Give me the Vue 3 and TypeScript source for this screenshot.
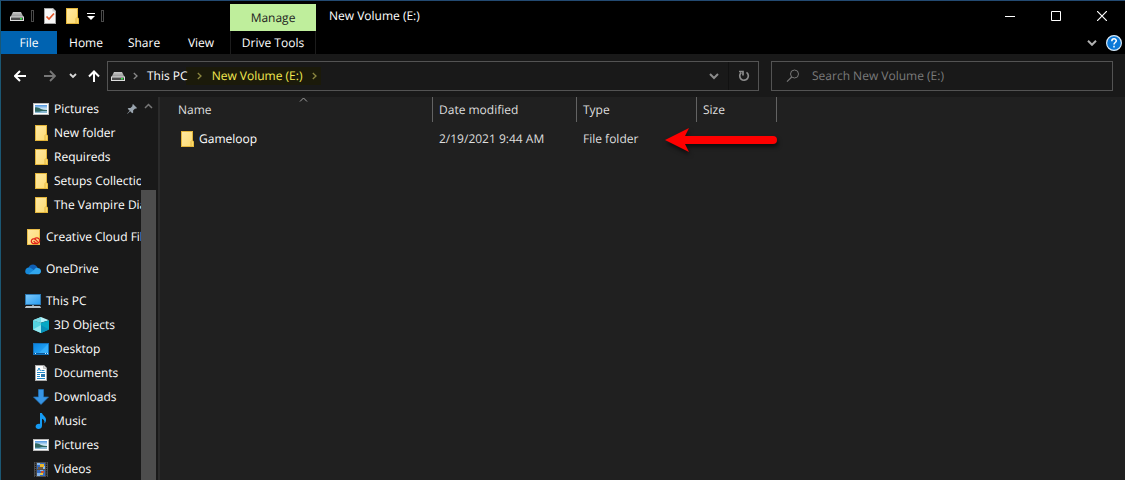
<script setup lang="ts">
import { ref } from 'vue'

interface NavItem {
  label: string
  icon: string
  level: 1 | 2
  pinned?: boolean
  gap?: boolean
}

interface FileRow {
  name: string
  modified: string
  type: string
  size: string
}

const tabs = ['Home', 'Share', 'View']
const query = ref('')

const navItems: NavItem[] = [
  { label: 'Pictures', icon: 'picture', level: 2, pinned: true },
  { label: 'New folder', icon: 'folder', level: 2 },
  { label: 'Requireds', icon: 'folder', level: 2 },
  { label: 'Setups Collectio', icon: 'folder', level: 2 },
  { label: 'The Vampire Dia', icon: 'folder', level: 2 },
  { label: 'Creative Cloud Fil', icon: 'cloudfolder', level: 1, gap: true },
  { label: 'OneDrive', icon: 'onedrive', level: 1, gap: true },
  { label: 'This PC', icon: 'pc', level: 1, gap: true },
  { label: '3D Objects', icon: 'cube', level: 2 },
  { label: 'Desktop', icon: 'desktop', level: 2 },
  { label: 'Documents', icon: 'document', level: 2 },
  { label: 'Downloads', icon: 'download', level: 2 },
  { label: 'Music', icon: 'music', level: 2 },
  { label: 'Pictures', icon: 'picture', level: 2 },
  { label: 'Videos', icon: 'video', level: 2 },
]

const files: FileRow[] = [
  { name: 'Gameloop', modified: '2/19/2021 9:44 AM', type: 'File folder', size: '' },
]
</script>

<template>
  <svg class="defs" aria-hidden="true">
    <defs>
      <linearGradient id="gFolder" x1="0" y1="0" x2="1" y2="1">
        <stop offset="0" stop-color="#ffe9a2" /><stop offset="1" stop-color="#fddc75" />
      </linearGradient>
      <linearGradient id="gScreen" x1="0" y1="0" x2="1" y2="1">
        <stop offset="0" stop-color="#7cc8fb" /><stop offset="1" stop-color="#2a9df0" />
      </linearGradient>
      <linearGradient id="gDesk" x1="0" y1="0" x2="1" y2="1">
        <stop offset="0" stop-color="#0a84e0" /><stop offset="1" stop-color="#2fb0ff" />
      </linearGradient>
      <linearGradient id="gDrive" x1="0" y1="0" x2="0" y2="1">
        <stop offset="0" stop-color="#c9c9c9" /><stop offset="1" stop-color="#8f8f8f" />
      </linearGradient>
      <linearGradient id="gSky" x1="0" y1="0" x2="0" y2="1">
        <stop offset="0" stop-color="#4c94e0" /><stop offset="0.5" stop-color="#d8ecf5" /><stop offset="1" stop-color="#7fb4d3" />
      </linearGradient>
    </defs>
    <symbol id="i-folder" viewBox="0 0 16 16">
      <path d="M2 0h12v9.5l1 1V16H2z" fill="#e3b53b" />
      <path d="M3 1h10v14H3z" fill="url(#gFolder)" />
      <path d="M12.4 15V10.800l.9-.9.9.9V15z" fill="#fbd968" />
      <path d="M12 15.500v-5l1-1.200" fill="none" stroke="#dba92f" stroke-width=".7" />
    </symbol>
    <symbol id="i-cloudfolder" viewBox="0 0 16 16">
      <path d="M2 0h13v16H2z" fill="#e9bd4a" />
      <path d="M3 1h11v14H3z" fill="url(#gFolder)" />
      <g fill="none" stroke="#e2231a" stroke-width="1.300">
        <path d="M12.800 14.600H8.700a2.400 2.400 0 1 1 1.500-4.300l2.600 2.600" />
        <path d="M8.600 12l1.700 1.700a2.700 2.700 0 1 0 1-4.800 2.500 2.500 0 0 0-1.800 1" />
      </g>
    </symbol>
    <symbol id="i-picture" viewBox="0 0 16 16">
      <path d="M0 2h16v12H0z" fill="#b9b9b9" />
      <path d="M1 3h14v10H1z" fill="#fff" />
      <path d="M2 4h12v8H2z" fill="url(#gSky)" />
      <path d="M2 6.400c2-.6 4 .4 6 1.600 2 .9 4 1.200 6 1.100v1H2z" fill="#2f6660" />
      <path d="M2 10h12v2H2z" fill="#8abad4" /><path d="M2 10h7l-3 1H2z" fill="#467b83" />
    </symbol>
    <symbol id="i-onedrive" viewBox="0 0 16 16">
      <path d="M3.400 7.200C4 3.600 9.700 1.300 12.500 6.500L9 10z" fill="#0f5fb4" />
      <path d="M.2 10.500C.2 7 3.400 5.700 5.800 7l5.200 3.500-6 2.700H3C1.300 13.200.2 12 .2 10.500z" fill="#1689da" />
      <path d="M9.200 8.800C10.500 6.200 13 6.400 13.600 7.300c1.600.2 2.400 1.600 2.400 3 0 1.700-1.200 2.900-2.700 2.900H3.400z" fill="#31a7ee" />
    </symbol>
    <symbol id="i-pc" viewBox="0 0 16 16">
      <path d="M0 1h16v11H0z" fill="#2c79b3" /><path d="M1 2h14v9H1z" fill="url(#gScreen)" />
      <path d="M7 12h2v1.500H7z" fill="#7f98aa" />
      <path d="M1 13h14l1 2H0z" fill="#d5dce2" /><path d="M1 14h14" stroke="#72838f" stroke-width=".6" />
    </symbol>
    <symbol id="i-cube" viewBox="0 0 16 16">
      <path d="M0 3.200 8 0l8 3.200-8 2.600z" fill="#b7f3f9" /><path d="M0 3.200 8 5.800V16L0 12.600z" fill="#54d2df" />
      <path d="M8 5.800l8-2.600v9.400L8 16z" fill="#06a8c4" /><path d="M0 3.200 8 0v5.800z" fill="#79dde8" />
      <path d="M0 12.600 8 8v8z" fill="#92e8ef" /><path d="M8 16V8l8 4.600z" fill="#0791ba" />
    </symbol>
    <symbol id="i-desktop" viewBox="0 0 16 16">
      <path d="M0 2h16v12H0z" fill="#1370b8" /><path d="M1 3h14v10H1z" fill="url(#gDesk)" />
      <path d="M6 12 15 3v9z" fill="#43b8ff" opacity=".6" /><path d="M1 12h14v1H1z" fill="#0a5798" />
      <path d="M2 12h1v1H2zM12 12h1v1h-1zM14 12h1v1h-1z" fill="#c6eaff" />
    </symbol>
    <symbol id="i-document" viewBox="0 0 16 16">
      <path d="M2 0h9l3 3v13H2z" fill="#aaa" /><path d="M3 1h7.500L13 3.500V15H3z" fill="#fff" />
      <path d="M10.500 0v3.500H14" fill="#d8d8d8" stroke="#999" stroke-width=".5" />
      <path d="M4.500 6 6 3l1.500 3M4 7.500h8M4 9.500h3M4 11.500h3M4 13.500h8M8.500 5.500h3" fill="none" stroke="#2289c9" />
      <path d="M8 9h4v3H8z" fill="#2c79ae" />
    </symbol>
    <symbol id="i-download" viewBox="0 0 16 16">
      <path d="M5.500.5h5v7.500h5L8 15.500.5 8h5z" fill="#3794e4" stroke="#2277be" stroke-width=".7" />
    </symbol>
    <symbol id="i-music" viewBox="0 0 16 16">
      <path d="M7 0h2c.3 2.200 4 3.400 4 6.800 0 1.700-.7 2.900-1.600 3.800.5-3-.8-4.300-2.400-4.800v6.900C9 14.800 7.300 16 5.400 16 3.700 16 2.600 15 2.600 13.600c0-2 2.200-3.300 4.400-2.700z" fill="#159bf3" />
    </symbol>
    <symbol id="i-video" viewBox="0 0 16 16">
      <path d="M1 1h14v15H1z" fill="#4e4e4e" />
      <path d="M2.500 1.500V16M13.500 1.500V16" stroke="#161616" stroke-width="1.200" stroke-dasharray="1.200 1" />
      <path d="M4 2h8v6H4zM4 9h8v6H4z" fill="#356cc4" />
      <path d="M4 2h3v2H4zM10 5h2v3h-2z" fill="#86b9ef" /><path d="M7 3h4v3H7z" fill="#e8b52b" />
      <path d="M5 6h5v2H5z" fill="#6d5840" /><path d="M7 9h3v1H7zM4 12h3v3H4z" fill="#87b4e7" />
      <path d="M8 10h3v2H8z" fill="#c6512e" /><path d="M7 12h3v2H7z" fill="#e2c647" />
    </symbol>
    <symbol id="i-drive" viewBox="0 0 16 16">
      <path d="M4 4h8l2.500 5h-13z" fill="url(#gDrive)" /><path d="M1 8.500h14V13H1z" fill="#dedede" />
      <path d="M2 9.500h12V12H2z" fill="#4b4b4b" /><path d="M11 10h2v1.500h-2z" fill="#34e746" />
    </symbol>
  </svg>

  <div class="window">
    <header class="titlebar">
      <div class="quick">
        <svg class="ico"><use href="#i-drive" /></svg>
        <span class="sep"></span>
        <button class="plain prop" aria-label="Properties">
          <svg class="ico" viewBox="0 0 16 16">
            <path d="M2 0h9l3 3v13H2z" fill="#a5a5a5" /><path d="M3 1h7.500L13 3.500V15H3z" fill="#f7f7f7" />
            <path d="M10.500 0v3.500H14" fill="#ccc" /><path d="M4.500 8.500 7 11l5-5.500" fill="none" stroke="#e4572a" stroke-width="1.700" />
          </svg>
        </button>
        <button class="plain newf" aria-label="New folder"><svg class="ico"><use href="#i-folder" /></svg></button>
        <button class="plain more" aria-label="Customize Quick Access Toolbar">
          <svg width="8" height="8" viewBox="0 0 8 8"><path d="M0 1.500h8" stroke="#fff" /><path d="M0 4h8L4 8z" fill="#fff" /></svg>
        </button>
        <span class="sep"></span>
      </div>
      <div class="manage">Manage</div>
      <h1>New Volume (E:)</h1>
      <div class="controls">
        <button class="plain" aria-label="Minimize"><svg width="10" height="10"><path d="M0 5.500h10" stroke="#fff" /></svg></button>
        <button class="plain" aria-label="Maximize"><svg width="10" height="10"><path d="M.5.5h9v9h-9z" fill="none" stroke="#fff" /></svg></button>
        <button class="plain" aria-label="Close"><svg width="10" height="10"><path d="M0 0l10 10M10 0 0 10" stroke="#fff" stroke-width="1.200" /></svg></button>
      </div>
    </header>

    <nav class="tabs" aria-label="Ribbon">
      <button class="plain file">File</button>
      <button v-for="t in tabs" :key="t" class="plain tab">{{ t }}</button>
      <button class="plain tools">Drive Tools</button>
      <button class="plain expand" aria-label="Expand the Ribbon">
        <svg width="10" height="6" viewBox="0 0 10 6"><path d="M1 .8l4 4 4-4" fill="none" stroke="#b0b0b0" stroke-width="2" /></svg>
      </button>
      <button class="plain help" aria-label="Help">
        <svg width="16" height="16" viewBox="0 0 16 16">
          <circle cx="8" cy="8" r="7.400" fill="#0c79d8" stroke="#d7e9f7" stroke-width="1.200" />
          <path d="M5.800 6.200c0-3.100 4.500-3 4.500-.4 0 1.700-2.300 1.700-2.300 3.600M8 10.800v1.600" fill="none" stroke="#fff" stroke-width="1.500" />
        </svg>
      </button>
    </nav>

    <div class="toolbar">
      <div class="history">
        <button class="plain" aria-label="Back"><svg width="12" height="12" viewBox="0 0 12 12"><path d="M12 6H1.500M6 1 1 6l5 5" fill="none" stroke="#fff" stroke-width="2" /></svg></button>
        <button class="plain" aria-label="Forward"><svg width="12" height="12" viewBox="0 0 12 12"><path d="M0 6h10.500M6 1l5 5-5 5" fill="none" stroke="#777" stroke-width="1.800" /></svg></button>
        <button class="plain recent" aria-label="Recent locations"><svg width="8" height="6" viewBox="0 0 8 6"><path d="M1 1l3 3 3-3" fill="none" stroke="#d8d8d8" stroke-width="1.800" /></svg></button>
        <button class="plain up" aria-label="Up"><svg width="12" height="12" viewBox="0 0 12 12"><path d="M6 12V1.500M1 6.500l5-5 5 5" fill="none" stroke="#fff" stroke-width="2" /></svg></button>
      </div>
      <div class="address">
        <svg class="ico"><use href="#i-drive" /></svg>
        <svg class="crumb" viewBox="0 0 5 8"><path d="M.8 1 4 4 .8 7" /></svg>
        <a href="#" class="place">This PC</a>
        <span class="marked">
          <svg class="crumb" viewBox="0 0 5 8"><path d="M.8 1 4 4 .8 7" /></svg>
          <a href="#">New Volume (E:)</a>
          <svg class="crumb" viewBox="0 0 5 8"><path d="M.8 1 4 4 .8 7" /></svg>
        </span>
        <button class="plain drop" aria-label="Previous locations"><svg width="10" height="8" viewBox="0 0 10 8"><path d="M1 2l4 4 4-4" fill="none" stroke="#8c8c8c" stroke-width="2" /></svg></button>
        <button class="plain refresh" aria-label="Refresh">
          <svg width="12" height="12" viewBox="0 0 12 12"><path d="M8.500 2.400A4.300 4.300 0 1 1 3.200 2.700M1 1.500h4v4" fill="none" stroke="#8c8c8c" stroke-width="1.700" /></svg>
        </button>
      </div>
      <label class="search">
        <svg width="14" height="14" viewBox="0 0 14 14"><circle cx="8.500" cy="5" r="4" fill="none" stroke="#777" /><path d="M5.700 8 1 12.700" stroke="#777" stroke-width="1.200" /></svg>
        <input v-model="query" type="text" placeholder="Search New Volume (E:)" aria-label="Search New Volume (E:)" />
      </label>
    </div>

    <div class="body">
      <aside class="side">
        <nav class="tree" aria-label="Folders">
          <a v-for="(n, i) in navItems" :key="i" href="#" class="node" :class="{ deep: n.level === 2, gap: n.gap }">
            <svg class="ico"><use :href="'#i-' + n.icon" /></svg>
            <span>{{ n.label }}</span>
            <svg v-if="n.pinned" class="pin" viewBox="0 0 10 10">
              <path d="M6 0l4 4-1 .7-.9-.2-2 2 .1 2-1 .8-2-2L.6 9.800l-.4-.4L2.700 6.800l-2-2 .8-.9 2 .1 2-2L5.300.9z" fill="#9aa5af" />
            </svg>
          </a>
        </nav>
        <div class="scroll" aria-hidden="true">
          <svg width="9" height="6" viewBox="0 0 9 6"><path d="M1 5l3.500-3.500L8 5" fill="none" stroke="#777" stroke-width="1.500" /></svg>
          <div class="thumb"></div>
        </div>
      </aside>

      <main class="list">
        <table>
          <colgroup><col class="c-name" /><col class="c-date" /><col class="c-type" /><col class="c-size" /></colgroup>
          <thead>
            <tr>
              <th scope="col" class="first">
                Name
                <svg class="sort" viewBox="0 0 9 5"><path d="M1 4.500 4.500 1 8 4.500" fill="none" stroke="#a0a0a0" /></svg>
              </th>
              <th scope="col">Date modified</th>
              <th scope="col">Type</th>
              <th scope="col">Size</th>
            </tr>
          </thead>
          <tbody>
            <tr v-for="f in files" :key="f.name">
              <td class="name"><div><svg class="ico"><use href="#i-folder" /></svg>{{ f.name }}</div></td>
              <td>{{ f.modified }}</td>
              <td>{{ f.type }}</td>
              <td>{{ f.size }}</td>
            </tr>
          </tbody>
        </table>
        <svg class="arrow" viewBox="0 0 120 36" aria-hidden="true">
          <path d="M2 15 26 3l-4 8h88a4 4 0 0 1 0 8H22l4 8z" fill="#fe0000" />
        </svg>
      </main>
    </div>
  </div>
</template>

<style>
body {
  background: #191919;
}
</style>

<style scoped>
.defs {
  position: absolute;
  width: 0;
  height: 0;
}
.window {
  box-sizing: border-box;
  height: 100vh;
  display: flex;
  flex-direction: column;
  overflow: hidden;
  border-top: 1px solid #234a72;
  border-left: 1px solid #1b5773;
  background: #191919;
  color: #fff;
  font: 12px/16px "Segoe UI", "Open Sans", "Noto Sans", sans-serif;
  text-rendering: geometricPrecision;
}
.plain {
  display: flex;
  align-items: center;
  justify-content: center;
  padding: 0;
  border: 0;
  background: none;
  color: inherit;
  font: inherit;
  text-rendering: inherit;
}
a {
  color: inherit;
  text-decoration: none;
}
svg {
  flex: none;
}
.ico {
  display: block;
  width: 16px;
  height: 16px;
}
.titlebar {
  display: flex;
  height: 30px;
  background: #000;
}
.quick {
  box-sizing: border-box;
  display: flex;
  align-items: center;
  width: 229px;
  padding-left: 8px;
}
.sep {
  box-sizing: border-box;
  width: 3px;
  height: 12px;
  margin-left: 6px;
  border: 1px solid #4a4a4a;
}
.prop {
  margin-left: 8px;
}
.newf {
  margin-left: 6px;
}
.more {
  margin-left: 7px;
}
.manage {
  width: 86px;
  margin-top: 3px;
  background: #bfee9c;
  color: #222;
  line-height: 28px;
  text-align: center;
}
h1 {
  margin: 0 0 0 13px;
  font: inherit;
  line-height: 30px;
}
.controls {
  display: flex;
  margin-left: auto;
}
.controls button {
  width: 46px;
}
.tabs {
  display: flex;
  height: 23px;
  background: #000;
}
.file {
  width: 56px;
  background: #0063b1;
}
.tab {
  width: 58px;
}
.tab:nth-child(4) {
  width: 56px;
}
.tools {
  width: 86px;
  border-right: 1px solid #1c1c1c;
  border-left: 1px solid #1c1c1c;
}
.tab + .tools {
  margin-left: 1px;
}
.expand {
  margin-left: auto;
}
.help {
  margin: 0 3px 0 9px;
}
.toolbar {
  display: flex;
  align-items: center;
  height: 43px;
}
.history {
  display: flex;
  width: 106px;
}
.history button {
  width: 30px;
  margin-left: 4px;
}
.history button + button {
  margin-left: 0;
}
.history .recent,
.history .up {
  width: 16px;
}
.history .up {
  margin-left: 5px;
}
.address,
.search {
  box-sizing: border-box;
  display: flex;
  align-items: center;
  height: 30px;
  border: 1px solid #535353;
}
.address {
  flex: 648;
  padding-left: 2px;
}
.crumb {
  width: 5px;
  height: 8px;
  fill: none;
  stroke: #8a8a8a;
  stroke-width: 1.300;
}
.address > .crumb {
  margin: 0 9px 0 7px;
}
.place {
  position: relative;
  z-index: 1;
}
.marked {
  position: relative;
  display: flex;
  align-items: center;
  gap: 10px;
  margin-left: 9px;
  padding: 1px 4px 1px 0;
  color: #f3ea52;
  isolation: isolate;
}
.marked::before {
  content: "";
  position: absolute;
  z-index: -1;
  inset: 0 0 0 -11px;
  background: #1b1a0a;
}
.marked .crumb {
  stroke: #8c8740;
}
.drop {
  width: 28px;
  margin-left: auto;
}
.refresh {
  width: 30px;
  align-self: stretch;
  border-left: 1px solid #111;
}
.search {
  flex: 326;
  margin: 0 12px;
  padding-left: 14px;
  gap: 12px;
}
.search input {
  flex: 1;
  min-width: 0;
  padding: 0;
  border: 0;
  outline: 0;
  background: none;
  color: #fff;
  font: inherit;
  text-rendering: inherit;
}
.search input::placeholder {
  color: #7b7b7b;
  opacity: 1;
}
.body {
  display: flex;
  flex: 1;
  min-height: 0;
}
.side {
  display: flex;
  flex: none;
  width: 157px;
  border-right: 2px solid #2b2b2b;
}
.tree {
  flex: 1;
  min-width: 0;
  overflow: hidden;
}
.node {
  display: flex;
  align-items: center;
  height: 24px;
  padding-left: 24px;
  gap: 5px;
  white-space: nowrap;
}
.node.deep {
  padding-left: 32px;
}
.node.gap {
  margin-top: 8px;
}
.pin {
  width: 10px;
  height: 10px;
  margin: 0 4px 0 auto;
}
.scroll {
  display: flex;
  flex-direction: column;
  align-items: center;
  width: 15px;
  margin-right: 2px;
  padding-top: 6px;
}
.thumb {
  flex: 1;
  align-self: stretch;
  margin-top: 81px;
  background: #4d4d4d;
}
.list {
  position: relative;
  flex: 1;
  min-width: 0;
  background: #202020;
}
table {
  width: 617px;
  table-layout: fixed;
  border-collapse: separate;
  border-spacing: 0;
}
.c-name {
  width: 273px;
}
.c-date {
  width: 144px;
}
.c-type {
  width: 120px;
}
.c-size {
  width: 80px;
}
th,
td {
  padding: 0 0 0 6px;
  color: #dedede;
  font-weight: 400;
  text-align: left;
}
th {
  position: relative;
  height: 25px;
  border-right: 1px solid #636363;
}
th.first {
  padding-left: 18px;
}
.sort {
  position: absolute;
  top: 0;
  left: 51%;
  width: 9px;
  height: 5px;
}
td {
  height: 34px;
}
td.name {
  padding-left: 19px;
  color: #fff;
}
.name div {
  display: flex;
  align-items: center;
  gap: 4px;
}
.arrow {
  position: absolute;
  top: 28px;
  left: 503px;
  width: 120px;
  height: 36px;
  filter: drop-shadow(1px 3px 2px #0009);
}
</style>
